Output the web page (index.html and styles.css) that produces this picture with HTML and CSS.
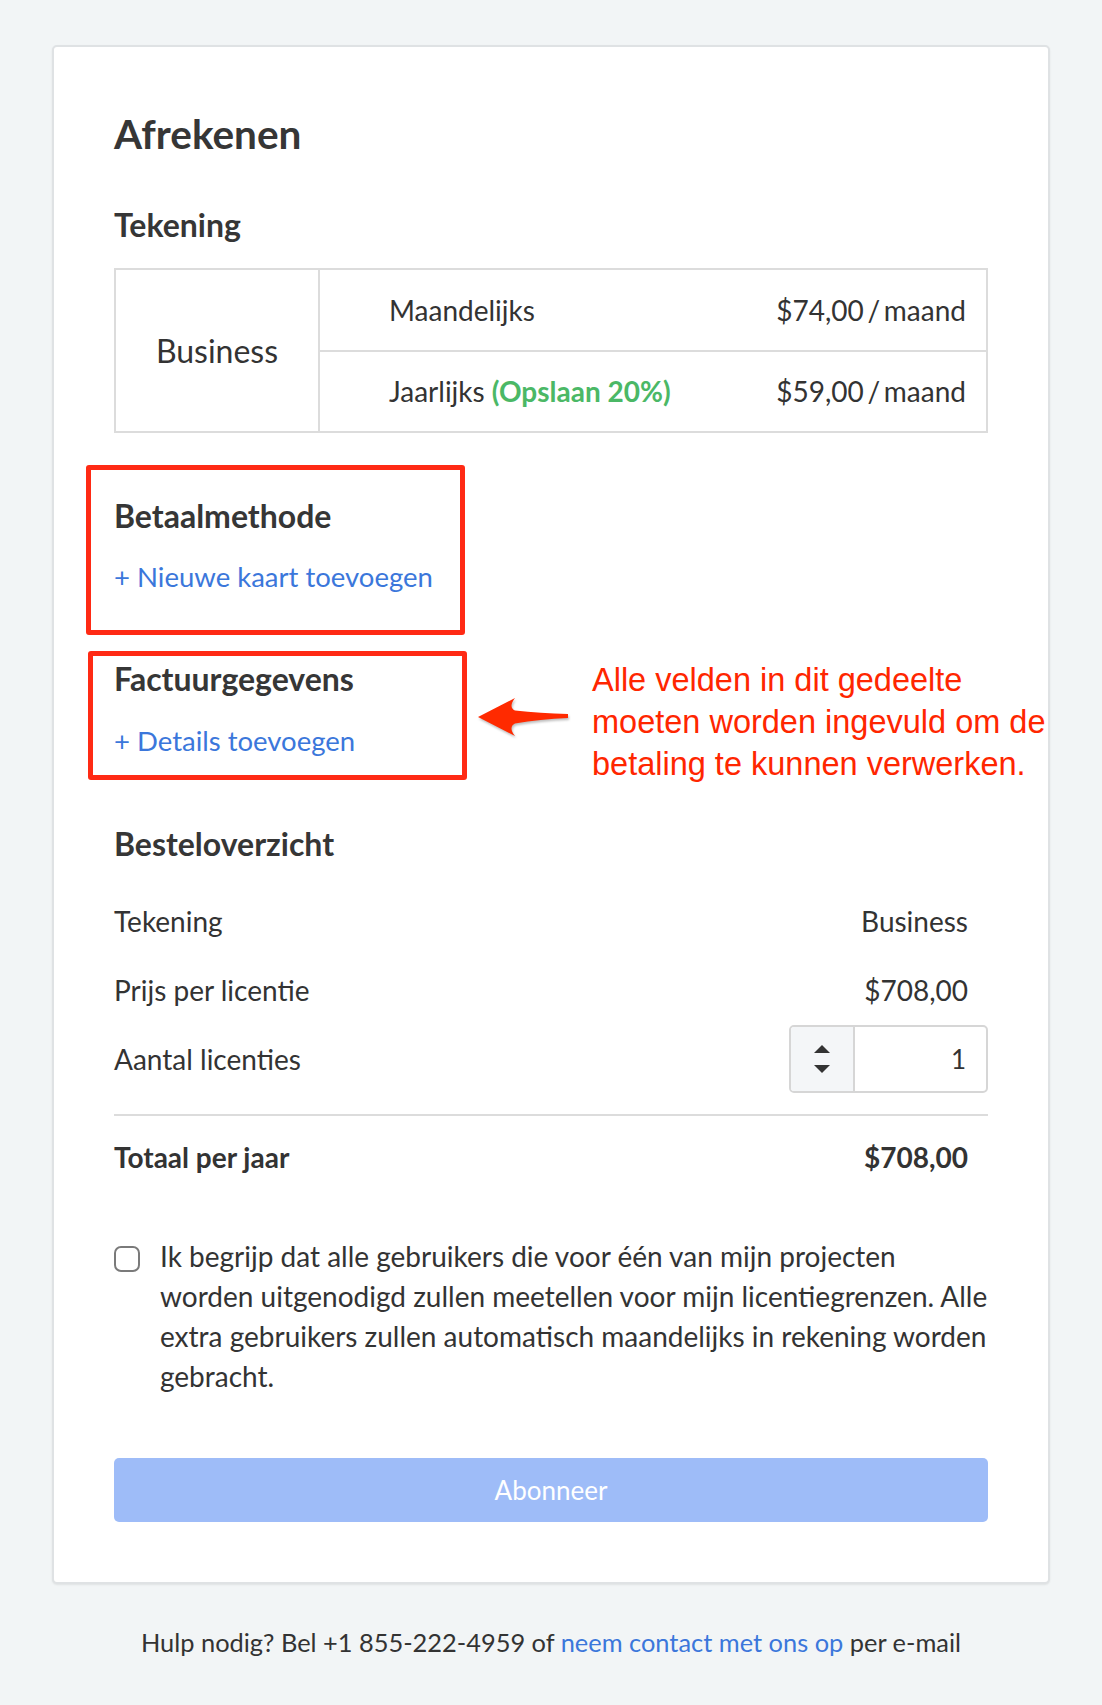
FILE: index.html
```html
<!DOCTYPE html>
<html lang="nl">
<head>
<meta charset="utf-8">
<title>Afrekenen</title>
<link rel="stylesheet" href="styles.css">
</head>
<body>
<main class="card">
  <h1 class="title">Afrekenen</h1>

  <h2 class="section-title">Tekening</h2>
  <div class="plan-table">
    <div class="plan-name">Business</div>
    <div class="plan-options">
      <div class="plan-option">
        <span>Maandelijks</span>
        <span class="price">$74,00 / maand</span>
      </div>
      <div class="plan-option">
        <span>Jaarlijks <span class="save">(Opslaan 20%)</span></span>
        <span class="price">$59,00 / maand</span>
      </div>
    </div>
  </div>

  <section class="annot-box box-payment">
    <h2 class="section-title">Betaalmethode</h2>
    <a class="add-link" href="#">+ Nieuwe kaart toevoegen</a>
  </section>

  <div class="annot-row">
    <section class="annot-box box-billing">
      <h2 class="section-title">Factuurgegevens</h2>
      <a class="add-link" href="#">+ Details toevoegen</a>
    </section>
    <svg class="annot-arrow" width="92" height="40" viewBox="0 0 92 40" aria-hidden="true">
      <path d="M0 20 L37 1 Q30 10 37 13.5 Q62 16 90 17 L90 21 Q62 22 37 26.5 Q30 30 37 39 Z" fill="#ff2a00"/>
    </svg>
    <p class="annot-text">Alle velden in dit gedeelte<br>moeten worden ingevuld om de<br>betaling te kunnen verwerken.</p>
  </div>

  <h2 class="section-title summary-title">Besteloverzicht</h2>
  <div class="summary">
    <div class="summary-row">
      <span>Tekening</span>
      <span class="value">Business</span>
    </div>
    <div class="summary-row">
      <span>Prijs per licentie</span>
      <span class="value">$708,00</span>
    </div>
    <div class="summary-row qty-row">
      <span>Aantal licenties</span>
      <div class="qty">
        <div class="qty-spin">
          <span class="tri tri-up"></span>
          <span class="tri tri-down"></span>
        </div>
        <div class="qty-value">1</div>
      </div>
    </div>
    <div class="summary-divider"></div>
    <div class="summary-row total-row">
      <span>Totaal per jaar</span>
      <span class="value">$708,00</span>
    </div>
  </div>

  <label class="agree">
    <input type="checkbox" class="agree-box">
    <span class="agree-text">Ik begrijp dat alle gebruikers die voor één van mijn projecten worden uitgenodigd zullen meetellen voor mijn licentiegrenzen. Alle extra gebruikers zullen automatisch maandelijks in rekening worden gebracht.</span>
  </label>

  <button class="subscribe" type="button">Abonneer</button>
</main>

<p class="help">Hulp nodig? Bel +1 855-222-4959 of <a href="#">neem contact met ons op</a> per e-mail</p>
</body>
</html>
```

FILE: styles.css
```css
* { box-sizing: border-box; }

html, body {
  margin: 0;
  padding: 0;
}

body {
  background: #f2f5f6;
  font-family: Lato, "Open Sans", "Liberation Sans", sans-serif;
  color: #333;
  font-size: 28px;
}

.card {
  width: 998px;
  margin: 45px auto 0;
  background: #fff;
  border: 2px solid #dfe2e4;
  border-radius: 5px;
  box-shadow: 0 1px 2px rgba(0, 0, 0, 0.08);
  padding: 63px 60px 60px;
}

.title {
  margin: 0;
  font-size: 40.5px;
  line-height: 48px;
  font-weight: 700;
  color: #363636;
}

.section-title {
  margin: 0;
  font-size: 32px;
  line-height: 38px;
  font-weight: 700;
  color: #363636;
}

.card > .section-title:first-of-type {
  margin-top: 48px;
}

/* plan table */
.plan-table {
  margin-top: 24px;
  display: flex;
  border: 2px solid #dcdcdc;
  height: 165px;
}

.plan-name {
  width: 204px;
  border-right: 2px solid #dcdcdc;
  display: flex;
  align-items: center;
  justify-content: center;
  font-size: 32px;
}

.plan-options {
  flex: 1;
  display: flex;
  flex-direction: column;
}

.plan-option {
  flex: 1;
  display: flex;
  align-items: center;
  justify-content: space-between;
  padding: 0 20px 0 69px;
  font-size: 28px;
}

.plan-option + .plan-option {
  border-top: 2px solid #dcdcdc;
}

.price {
  word-spacing: -3.5px;
}

.save {
  color: #4bb866;
  font-weight: 700;
}

/* annotated boxes */
.annot-box {
  border: 5px solid #ff2a14;
  border-radius: 3px;
  width: 379px;
}

.box-payment {
  margin: 32px 0 0 -28px;
  padding: 27px 0 36px 23px;
}

.box-billing {
  margin: 0 0 0 -26px;
  padding: 4px 0 17px 21px;
  flex-shrink: 0;
}

.add-link {
  display: block;
  margin-top: 25px;
  font-size: 27.5px;
  line-height: 34px;
  color: #3b77db;
  text-decoration: none;
}

.box-billing .add-link {
  margin-top: 26px;
}

.annot-row {
  margin-top: 16px;
  display: flex;
  align-items: flex-start;
}

.annot-arrow {
  flex-shrink: 0;
  margin: 46px 0 0 11px;
  filter: drop-shadow(1px 2px 1px rgba(0, 0, 0, 0.25));
}

.annot-text {
  flex-shrink: 0;
  margin: 8px 0 -30px 22px;
  white-space: nowrap;
  font-family: "Liberation Sans", Arial, sans-serif;
  font-size: 32.5px;
  line-height: 42px;
  color: #ff2600;
}

/* summary */
.summary-title {
  margin-top: 45px;
}

.summary {
  margin-top: 23px;
}

.summary-row {
  display: flex;
  align-items: center;
  justify-content: space-between;
  height: 69px;
  line-height: 34px;
}

.summary-row .value {
  margin-right: 20px;
}

.qty-row {
  height: 70px;
}

.qty {
  display: flex;
  width: 199px;
  height: 68px;
  border: 2px solid #d6d6d6;
  border-radius: 5px;
  overflow: hidden;
}

.qty-spin {
  width: 64px;
  background: #f4f6f8;
  border-right: 2px solid #d6d6d6;
  display: flex;
  flex-direction: column;
  align-items: center;
  justify-content: center;
  gap: 12px;
}

.tri {
  width: 0;
  height: 0;
  border-left: 8px solid transparent;
  border-right: 8px solid transparent;
}

.tri-up { border-bottom: 8px solid #333; }
.tri-down { border-top: 8px solid #333; }

.qty-value {
  flex: 1;
  display: flex;
  align-items: center;
  justify-content: flex-end;
  padding-right: 20px;
  font-size: 26px;
}

.summary-divider {
  margin-top: 20px;
  height: 2px;
  background: #dcdcdc;
}

.total-row {
  margin-top: 6px;
  font-weight: 700;
}

/* agreement */
.agree {
  margin-top: 45px;
  display: flex;
  align-items: flex-start;
  gap: 20px;
  font-size: 28px;
  line-height: 40px;
}

.agree-box {
  appearance: none;
  -webkit-appearance: none;
  flex-shrink: 0;
  margin: 10px 0 0;
  width: 26px;
  height: 26px;
  border: 2.5px solid #7a7a7a;
  border-radius: 7px;
  background: #fff;
}

.agree-text {
  flex: 1;
}

.subscribe {
  display: block;
  width: 100%;
  margin-top: 62px;
  height: 64px;
  border: none;
  border-radius: 5px;
  background: #9ebcf8;
  color: #fff;
  font-family: Lato, "Open Sans", sans-serif;
  font-size: 26px;
  cursor: pointer;
}

.help {
  margin: 41px 0 0;
  text-align: center;
  font-size: 25.4px;
  line-height: 34px;
  color: #333;
}

.help a {
  color: #3b77db;
  text-decoration: none;
}
```
